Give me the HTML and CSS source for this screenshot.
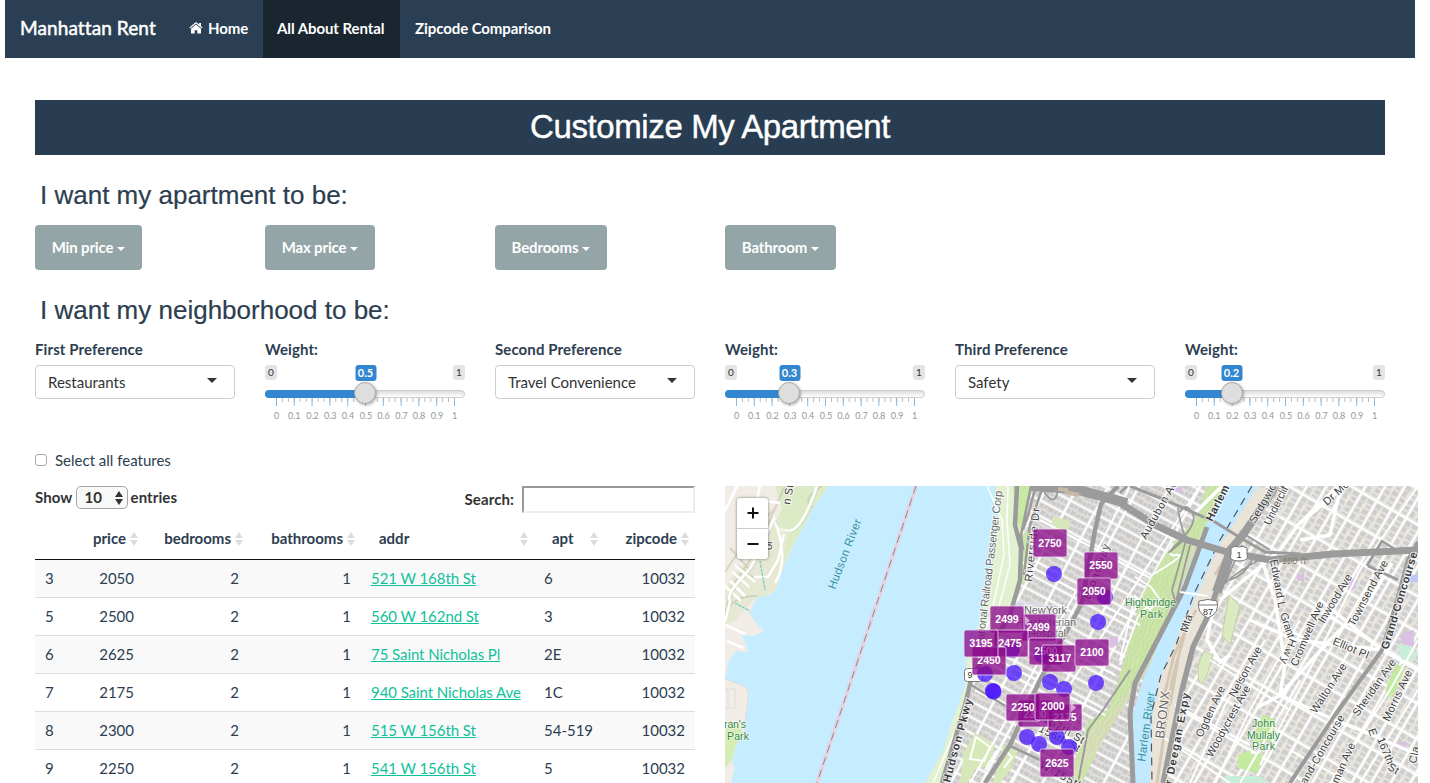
FILE: index.html
```html
<!DOCTYPE html>
<html lang="en">
<head>
<meta charset="utf-8">
<title>Manhattan Rent</title>
<link rel="stylesheet" href="styles.css">
</head>
<body>
<svg class="defs" width="0" height="0">
  <defs>
    <symbol id="sort" viewBox="0 0 8 14"><path d="M4 0l4 6H0zM4 14l4-6H0z" fill="#dcdcdc"/></symbol>
    <pattern id="minor" x="11" width="5.933" height="4" patternUnits="userSpaceOnUse"><rect width="1" height="4" fill="#bbb"/></pattern>
    <pattern id="major" x="11" width="17.8" height="8" patternUnits="userSpaceOnUse"><rect width="1" height="8" fill="#86b9e2"/></pattern>
    <g id="scale">
      <rect x="11" width="179" height="4" fill="url(#minor)"/>
      <rect x="11" width="179" height="8" fill="url(#major)"/>
      <g class="scale-text">
        <text x="11.5" y="21">0</text><text x="29.3" y="21">0.1</text><text x="47.5" y="21">0.2</text><text x="65.3" y="21">0.3</text><text x="83" y="21">0.4</text><text x="101" y="21">0.5</text><text x="118.5" y="21">0.6</text><text x="136.5" y="21">0.7</text><text x="154" y="21">0.8</text><text x="172" y="21">0.9</text><text x="189.5" y="21">1</text>
      </g>
    </g>
  </defs>
</svg>

<nav class="navbar">
  <a class="brand">Manhattan Rent</a>
  <a class="nav-item home"><svg width="14" height="12" viewBox="0 0 14 12"><path d="M7 2.6L2 6.8V11q0 .6.6.6H5.700V8.200h2.600v3.400h3.100q.6 0 .6-.6V6.800zM13.600 5.600L12 4.200V1h-1.900v1.600L7.700.600Q7 .1 6.300.600L.4 5.600l.6.8L7 1.400l6 5z" fill="#fff"/></svg>Home</a>
  <a class="nav-item all active">All About Rental</a>
  <a class="nav-item zip">Zipcode Comparison</a>
</nav>

<main class="page">
  <h1 class="banner"><span>Customize My Apartment</span></h1>
  <h2 class="question apt-q">I want my apartment to be:</h2>
  <div class="columns">
    <div><button class="drop b1">Min price<i></i></button></div>
    <div><button class="drop b2">Max price<i></i></button></div>
    <div><button class="drop b3">Bedrooms<i></i></button></div>
    <div><button class="drop b4">Bathroom<i></i></button></div>
  </div>
  <h2 class="question hood-q">I want my neighborhood to be:</h2>
  <div class="columns prefs">
    <div><label class="caption">First Preference</label><div class="choice">Restaurants<i></i></div></div>
    <div><label class="caption">Weight:</label>
      <div class="slider"><div class="ends"><span>0</span><span>1</span></div><div class="track"><div class="fill" style="width:100px"></div></div>
      <svg class="scale" width="200" height="24"><use href="#scale"/></svg><b class="value" style="left:100.500px">0.5</b><span class="handle" style="left:100px"></span></div></div>
    <div><label class="caption">Second Preference</label><div class="choice">Travel Convenience<i></i></div></div>
    <div><label class="caption">Weight:</label>
      <div class="slider"><div class="ends"><span>0</span><span>1</span></div><div class="track"><div class="fill" style="width:64px"></div></div>
      <svg class="scale" width="200" height="24"><use href="#scale"/></svg><b class="value" style="left:64.500px">0.3</b><span class="handle" style="left:64px"></span></div></div>
    <div><label class="caption">Third Preference</label><div class="choice">Safety<i></i></div></div>
    <div><label class="caption">Weight:</label>
      <div class="slider"><div class="ends"><span>0</span><span>1</span></div><div class="track"><div class="fill" style="width:47px"></div></div>
      <svg class="scale" width="200" height="24"><use href="#scale"/></svg><b class="value" style="left:46.500px">0.2</b><span class="handle" style="left:47px"></span></div></div>
  </div>
  <label class="check"><span class="box"></span><span class="check-text">Select all features</span></label>

  <div class="results">
    <section class="listing">
      <div class="tools">
        <div class="length"><span class="word">Show</span><span class="num"><span class="word">10</span><svg width="8" height="14" viewBox="0 0 8 14"><path d="M4 0l4 6H0zM4 14l4-6H0z" fill="#333"/></svg></span><span class="word">entries</span></div>
        <div class="search"><span class="word">Search:</span><span class="field"></span></div>
      </div>
      <table>
        <colgroup><col class="c1"><col class="c2"><col class="c3"><col class="c4"><col class="c5"><col class="c6"><col class="c7"></colgroup>
        <thead><tr><th></th>
          <th><div class="head"><span class="word">price</span><svg><use href="#sort"/></svg></div></th>
          <th><div class="head"><span class="word">bedrooms</span><svg><use href="#sort"/></svg></div></th>
          <th><div class="head"><span class="word">bathrooms</span><svg><use href="#sort"/></svg></div></th>
          <th><div class="head wide"><span class="word">addr</span><svg><use href="#sort"/></svg></div></th>
          <th><div class="head wide"><span class="word">apt</span><svg><use href="#sort"/></svg></div></th>
          <th><div class="head"><span class="word">zipcode</span><svg><use href="#sort"/></svg></div></th></tr></thead>
        <tbody>
          <tr><td class="l">3</td><td>2050</td><td>2</td><td>1</td><td class="l"><a>521 W 168th St</a></td><td class="l">6</td><td>10032</td></tr>
          <tr><td class="l">5</td><td>2500</td><td>2</td><td>1</td><td class="l"><a>560 W 162nd St</a></td><td class="l">3</td><td>10032</td></tr>
          <tr><td class="l">6</td><td>2625</td><td>2</td><td>1</td><td class="l"><a>75 Saint Nicholas Pl</a></td><td class="l">2E</td><td>10032</td></tr>
          <tr><td class="l">7</td><td>2175</td><td>2</td><td>1</td><td class="l"><a>940 Saint Nicholas Ave</a></td><td class="l">1C</td><td>10032</td></tr>
          <tr><td class="l">8</td><td>2300</td><td>2</td><td>1</td><td class="l"><a>515 W 156th St</a></td><td class="l">54-519</td><td>10032</td></tr>
          <tr><td class="l">9</td><td>2250</td><td>2</td><td>1</td><td class="l"><a>541 W 156th St</a></td><td class="l">5</td><td>10032</td></tr>
        </tbody>
      </table>
    </section>

    <section class="map">
      <svg width="693" height="297" viewBox="725 486 693 297">
        <defs>
          <pattern id="city" width="27" height="14" patternUnits="userSpaceOnUse" patternTransform="translate(1040 500) rotate(28)">
            <rect width="27" height="14" fill="#fff"/><rect x="1" y="1" width="25" height="12.300" fill="#dfdedc"/>
            <path d="M2 2h4v4H2zM7 2h3v3H7zM11 2h6v4h-6zM18 2h3v4h-3zM22 2h3v3h-3zM2 8h3v4H2zM6 8h5v4H6zM12 9h4v3h-4zM17 8h3v4h-3zM21 8h4v4h-4z" fill="#cbcac9"/>
          </pattern>
          <pattern id="bronx" width="17" height="31" patternUnits="userSpaceOnUse" patternTransform="translate(1300 600) rotate(30)">
            <rect width="17" height="31" fill="#fff"/><rect x="1" y="1" width="15" height="29" fill="#e6e4e0"/>
            <path d="M2 2h5v5H2zM9 2h6v4H9zM2 8h4v6H2zM10 8h5v3h-5zM9 13h6v5H9zM2 16h5v4H2zM2 22h4v6H2zM10 20h5v4h-5zM9 26h6v2H9z" fill="#cfcecc"/><path d="M7 9h2v8H7z" fill="#f1eadb"/>
          </pattern>
          <pattern id="contour" width="9" height="18" patternUnits="userSpaceOnUse" patternTransform="rotate(24)">
            <path d="M2 0Q5 5 2 9T2 18M6 0Q8 5 6 9T6 18" fill="none" stroke="#b8cc9c" stroke-width=".5"/>
          </pattern>
        </defs>
        <rect x="725" y="486" width="693" height="297" fill="#c6edff"/>

        <!-- New Jersey shore -->
        <path d="M725 486H828L812 510 800 533 785 563 776 590 770 595 756 597 750 614 758 625 764 631 754 636 742 635 748 652 736 651 729 660 725 677z" fill="#f1ede6"/>
        <path d="M775 486H828L812 510 800 533 788 555 776 588 766 596 757 598 764 560 770 534 782 508z" fill="#dcebc6"/>
        <path d="M725 590Q738 562 764 556L766 530 788 534 775 592 757 596 736 620 725 625z" fill="#e6e8d3"/>
        <path d="M785 486L775 508 764 534 750 560 730 590 725 620M822 486Q800 500 813 508M776 508L763 520 733 560 725 572M730 548L750 570M737 565L754 578M735 572L748 587M725 610Q738 595 757 596" fill="none" stroke="#c5c4ae" stroke-width="2" opacity=".6"/>
        <path d="M725 679L744 686Q750 690 748 698L744 735 736 745 732 763 735 768 731 783H725z" fill="#f1ede6"/>
        <path d="M725 729L738 724 744 734 736 745 732 760 725 768z" fill="#d5ecb6"/>
        <path d="M817 486Q802 530 789 531T774 519L757 553Q754 566 740 580T730 601L725 622M774 519Q790 560 775 583M784 534L778 560 768 577H754M757 500L780 503M737 486L725 511M760 486L757 500M735 565L755 582M733 572L749 587M730 581L745 596M725 586L741 601M725 625L745 634M727 641L743 648" fill="none" stroke="#fff" stroke-width="2.500"/>
        <path d="M817 486Q802 530 789 531T774 519L757 553Q754 566 740 580T730 601" fill="none" stroke="#ccc" stroke-width=".6" transform="translate(2 1)"/>
        <path d="M760 561L765 590M735 603L750 611" fill="none" stroke="#65cfc5" stroke-width="1.200" stroke-dasharray="3 1"/>
        <path d="M725 679L744 686Q750 690 748 698L744 735 736 745M725 689H735V708H725M728 689V708" fill="none" stroke="#ddd" stroke-width="1"/>

        <path d="M916 486L817 783" stroke="#e3d3e0" stroke-width="4"/>
        <path d="M916 486L817 783" stroke="#99858f" stroke-width="1" stroke-dasharray="8 5"/>

        <!-- Manhattan and the Bronx -->
        <path d="M995 486L998 513 993 547 990 580 982 613 975 640 967 660 965 687 953 720 942 753 925 783H1418V486z" fill="url(#city)"/>
        <path d="M1258 486L1218 547 1198 593 1173 647 1160 680 1153 713 1150 783H1418V486z" fill="url(#bronx)"/>
        <path d="M995 486L998 513 993 547 990 580 982 613 975 640 967 660 965 687 953 720 942 753 925 783H940L957 735 967 700 980 660 1003 625 1018 590 1024 560 1022 535 1033 486z" fill="#e2f1d0"/>
        <path d="M1013 486H1033L1022 532 1016 520zM1020 535L1032 530 1026 580 1021 585z" fill="#c9e7a5"/>
        <path d="M975 733L995 745 990 765 975 770 967 783H960L964 752zM1003 745L1018 750 1010 770 1000 783H993zM1052 517L1070 520 1068 532 1052 536z" fill="#d6e8b8"/>
        <path d="M976 737L990 747 984 761 970 759zM1005 750L1012 757 1004 768M985 770L997 750" fill="none" stroke="#fff" stroke-width="2"/>
        <path d="M1207 486L1195 520 1173 543 1153 575 1140 600 1133 630 1122 668 1110 708 1088 722 1073 765 1070 783H1082L1100 745 1130 697 1150 665 1172 605 1195 555 1210 520 1228 486z" fill="#cce6a8"/>
        <path d="M1190 550L1165 620 1140 675 1110 713 1085 735 1072 783 1090 760 1130 697 1150 665 1175 595 1210 520z" fill="#d8dfb8"/>
        <path d="M1207 486L1195 520 1173 543 1153 575 1140 600 1133 630 1122 668 1110 708 1088 722 1073 765 1100 745 1130 697 1150 665 1172 605 1195 555 1228 486z" fill="url(#contour)"/>
        <path d="M1135 577L1151 587 1160 600 1150 610 1135 596 1120 660M1173 543Q1165 557 1177 555T1152 575M1164 607Q1142 600 1135 625L1120 665" fill="none" stroke="#fff" stroke-width="1.800"/>
        <path d="M1227 486L1203 530 1197 547 1179 593 1157 647 1143 680 1133 713 1135 783H1150L1153 713 1160 680 1173 647 1198 593 1218 547 1230 530 1258 486z" fill="#c1e9ff"/>
        <path d="M1258 486L1230 530 1218 547 1198 593 1173 647 1160 680 1153 713 1150 783H1163L1182 690 1193 647 1213 600 1235 547 1270 490z" fill="#eae4d8"/>
        <path d="M1196 610L1174 655 1162 705M1187 625L1172 680 1157 783M1242 530L1215 575M1178 660L1170 705" fill="none" stroke="#c7b9a3" stroke-width="3" opacity=".65"/>
        <path d="M1252 486L1220 540 1194 594 1176 645 1161 675 1151 715 1152 783" fill="none" stroke="#555" stroke-width="1.200" stroke-dasharray="8 6"/>
        <path d="M1205 650Q1195 667 1199 680T1213 655L1203 651M1229 595L1240 605 1230 645 1222 635z" fill="#dceac2" stroke="#bed0a5"/>
        <path d="M1263 714L1275 720 1274 742 1252 742zM1252 755L1263 753 1258 772H1250zM1238 755L1250 750 1256 772 1238 768zM1397 664L1405 668 1392 700 1385 690z" fill="#c4eaa0"/>
        <path d="M1397 645H1415V660H1402zM1225 776H1260L1270 783H1222z" fill="#c8eed9"/>
        <path d="M1402 633L1414 630V647L1401 643zM1348 582L1356 577V588L1348 592zM1296 576L1304 573V581H1298zM1398 743L1406 741V750L1397 748zM1170 488L1182 486V494zM1110 637L1118 636V645L1110 648z" fill="#d8c1e3"/>
        <path d="M1409 575H1418V582H1407z" fill="#bec7f2"/>
        <path d="M1000 615L1020 600 1050 605 1058 625 1035 645 1010 635z" fill="#dddbe9" opacity=".8"/>

        <g fill="none" stroke="#fff" stroke-width="3.500">
          <path d="M1338 486L1298 525 1280 550 1220 600M1298 525L1340 490 1330 535 1300 540M1250 620L1295 640 1382 650 1418 670M1262 560L1275 600 1285 665 1280 695 1330 718 1365 732 1418 755M1281 695L1258 707M1320 600L1382 650M1280 695L1330 640 1370 600 1392 563M1215 597L1207 640 1220 662 1230 655M1222 486L1195 513"/>
          <path d="M1130 486L1082 580 1018 700 970 783M1200 486L1060 700 1010 783M1040 520L1150 578M1018 560L1140 625M998 615L1115 675M988 655L1105 715M975 690L1070 740" stroke-width="2"/>
          <path d="M1260 765L1320 650 1360 570 1418 486M1190 783L1225 705 1265 640M1215 783L1250 710 1300 620M1240 783L1300 680M1330 783L1390 690 1418 640M1360 783L1418 690M1160 735L1230 783M1175 705L1250 745M1210 660L1290 710M1290 750L1350 783M1310 600L1350 630" stroke-width="2"/>
        </g>
        <path d="M987 486L1002 520 1004 555 990 620 975 650 962 715 933 783M1008 486L1007 520 1010 565 998 610" fill="none" stroke="#fff" stroke-width="1.500"/>

        <g fill="none" stroke="#9b9b9b" stroke-linejoin="round">
          <path d="M1017 486L1015 525 1021 548 1020 580 1010 615 988 650 971 680 965 705 960 722 942 783" stroke-width="4.500"/>
          <path d="M1031 486L1021 535 1023 550M1036 486L1028 515 1023 530M1043 486L1030 525 1024 575" stroke-width="2.500"/>
          <path d="M1118 486L1101 504 1095 530 1082 603 1062 640 1040 680 1010 745 985 783" stroke-width="4.500"/>
          <path d="M968 683L1007 707M1008 745L1040 760 1075 780M1120 493L1127 486" stroke-width="2.500"/>
          <path d="M1030 486L1075 489 1127 503" stroke-width="10"/>
          <path d="M1120 503L1155 525 1187 540 1227 552 1270 560 1333 554 1418 550" stroke-width="7"/>
          <path d="M1130 486L1165 500 1215 522 1244 540 1265 552 1300 554" stroke-width="3"/>
          <path d="M1207 527L1185 587 1160 635 1135 683 1130 713 1133 783" stroke-width="5"/>
          <path d="M1276 486L1243 535 1230 550" stroke-width="8"/><path d="M1232 548L1217 592" stroke-width="10"/>
          <path d="M1217 590L1207 618 1193 647 1182 690 1163 783" stroke-width="5.500"/>
          <path d="M1178 508Q1180 525 1187 542M1180 512Q1185 502 1192 512T1178 543 1187 537L1172 590 1176 605M1242 545L1225 583Q1250 562 1268 557M1246 535L1270 550M1230 580Q1245 575 1252 560M1175 605L1190 545M1050 492Q1060 482 1057 494T1044 492" stroke-width="1.800"/>
          <path d="M1130 670L1103 710 1088 730 1078 783" stroke-width="2"/>
          <path d="M1418 542L1408 560 1397 600 1382 650 1335 715 1290 783" stroke-width="4"/>
          <path d="M1367 566L1382 541 1398 551M1368 566L1398 580" stroke-width="2.500"/>
        </g>
        <path d="M1058 489l10 1M1065 492l14 3" stroke="#c4b8a6" stroke-width="4"/>
        <path d="M1180 592L1208 596" stroke="#fff" stroke-width="2"/>

        <g class="road">
          <text transform="translate(790 505) rotate(-80)" textLength="20">n St</text>
          <text transform="translate(772 550) rotate(-90)">or</text>
          <text class="soft" transform="translate(984 640) rotate(-83)" textLength="150">ational Railroad Passenger Corp</text>
          <text transform="translate(1032 582) rotate(-84)" textLength="74">Riverside Dr</text>
          <text transform="translate(1090 600) rotate(-70)" textLength="58">Broadway</text>
          <text transform="translate(1146 540) rotate(-61)" textLength="64">Audubon Av</text>
          <text transform="translate(1212 522) rotate(-63)" textLength="39" class="strong">Harlem</text>
          <text transform="translate(1255 524) rotate(-60)" textLength="43">Sedgwic</text>
          <text transform="translate(1270 526) rotate(-64)" textLength="42">Underclif</text>
          <text transform="translate(1327 506) rotate(-42)" textLength="30">Dr Mc</text>
          <text transform="translate(1270 560) rotate(80)" textLength="49">Edward L</text>
          <text transform="translate(1280 614) rotate(72)" textLength="26">Grant</text>
          <text transform="translate(1290 638) rotate(112)" textLength="26">Hwy</text>
          <text transform="translate(1297 667) rotate(-67)" textLength="69">Cromwell Ave</text>
          <text transform="translate(1324 624) rotate(-59)" textLength="55">Inwood Ave</text>
          <text transform="translate(1354 627) rotate(-62)" textLength="73">Townsend Ave</text>
          <text transform="translate(1332 644) rotate(23)" textLength="38">Elliot Pl</text>
          <text transform="translate(1388 650) rotate(-73)" textLength="101" class="strong">Grand-Concourse</text>
          <text transform="translate(1316 714) rotate(-57)" textLength="57">Walton Ave</text>
          <text transform="translate(1358 717) rotate(-55)" textLength="67">Sheridan Ave</text>
          <text transform="translate(1389 722) rotate(-65)" textLength="55">Morris Ave</text>
          <text transform="translate(1306 785) rotate(-60)" textLength="78">and-Concourse</text>
          <text transform="translate(1338 784) rotate(-66)" textLength="43">man Ave</text>
          <text transform="translate(1368 730) rotate(70)" textLength="8">E</text>
          <text transform="translate(1377 739) rotate(68)" textLength="28">167th</text>
          <text transform="translate(1387 769) rotate(30)" textLength="11">St</text>
          <text transform="translate(1416 764) rotate(-78)" textLength="17">Cla</text>
          <text transform="translate(1202 738) rotate(-65)" textLength="55">Ogden Ave</text>
          <text transform="translate(1235 698) rotate(-61)" textLength="56">Nelson Ave</text>
          <text transform="translate(1212 758) rotate(-61)" textLength="80">Woodycrest Ave</text>
          <text transform="translate(1172 785) rotate(-79)" textLength="93" class="strong">r Deegan Expy</text>
          <text transform="translate(1164 739) rotate(-83)" textLength="48" class="soft large">BRONX</text>
          <text transform="translate(1187 633) rotate(-72)" textLength="18">Mta</text>
          <text transform="translate(950 783) rotate(-75)" textLength="86" class="strong">Hudson Pkwy</text>
          <text transform="translate(1030 714) rotate(30)" textLength="60">W 157th St</text>
          <text transform="translate(1038 731) rotate(28)" textLength="45">156th St</text>
          <text transform="translate(1039 767) rotate(29)" textLength="48">W-155th</text>
          <text x="1024" y="614" textLength="43" class="soft">NewYork</text><text x="1016" y="626" textLength="60" class="soft">Presbyterian</text><text x="1028" y="637" textLength="38" class="soft">Hospital</text>
          <text x="1282" y="564" textLength="24" class="feet">100 ft</text>
        </g>
        <g class="river"><text transform="translate(835 590) rotate(-69)" textLength="74">Hudson River</text><text transform="translate(1145 762) rotate(-82)" textLength="70">Harlem River</text></g>
        <g class="park"><text x="1125" y="606" textLength="51">Highbridge</text><text x="1140" y="618" textLength="23">Park</text><text x="1252" y="727" textLength="23">John</text><text x="1247" y="739" textLength="33">Mullaly</text><text x="1252" y="750" textLength="23">Park</text><text x="724" y="728" textLength="22">ran's</text><text x="727" y="740" textLength="22">Park</text></g>

        <g fill="#fff" stroke="#777"><path d="M1231 548Q1235 545 1239 547 1243 545 1247 548L1247 554Q1250 561 1239 561T1231 554z"/><path d="M1199 601Q1208 598 1217 601 1220 613 1208 618 1196 613 1199 601zM1198 605H1218" /><rect x="964.500" y="668.500" width="18" height="13" rx="3"/></g>
        <g class="shield"><text x="1239" y="558">1</text><text x="1208" y="615">87</text><text x="970" y="678">9</text></g>

        <g fill="#4815ff" fill-opacity=".76">
          <circle cx="1054" cy="574" r="8"/><circle cx="1105" cy="597" r="8"/><circle cx="1098" cy="622" r="8"/><circle cx="1012" cy="650" r="8"/><circle cx="1042" cy="655" r="8"/><circle cx="985" cy="674" r="8"/><circle cx="1014" cy="673" r="8"/><circle cx="993" cy="691" r="8"/><circle cx="993.500" cy="691.500" r="8"/><circle cx="1050" cy="682" r="8"/><circle cx="1064" cy="689" r="8"/><circle cx="1096" cy="683" r="8"/><circle cx="1027" cy="737" r="8"/><circle cx="1039" cy="744" r="8"/><circle cx="1057" cy="737" r="8"/><circle cx="1069" cy="747" r="8"/>
        </g>
        <g class="price">
          <g transform="translate(1033 529)"><rect width="34" height="28" rx="2"/><text x="17" y="18">2750</text></g>
          <g transform="translate(1084 552)"><rect width="34" height="27" rx="2"/><text x="17" y="17">2550</text></g>
          <g transform="translate(1077 578)"><rect width="34" height="27" rx="2"/><text x="17" y="17">2050</text></g>
          <g transform="translate(1022 614)"><rect width="34" height="27" rx="2"/><text x="16" y="17">2499</text></g>
          <g transform="translate(990 606)"><rect width="34" height="27" rx="2"/><path d="M35 10v9l5-4.500z"/><text x="17" y="17">2499</text></g>
          <g transform="translate(994 630)"><rect width="34" height="27" rx="2"/><text x="16" y="17">2475</text></g>
          <g transform="translate(972 647)"><rect width="34" height="28" rx="2"/><text x="17" y="17">2450</text></g>
          <g transform="translate(964 630)"><rect width="34" height="27" rx="2"/><text x="17" y="17">3195</text></g>
          <g transform="translate(1029 638)"><rect width="34" height="27" rx="2"/><text x="17" y="17">2500</text></g>
          <g transform="translate(1042 645)"><rect width="34" height="27" rx="2"/><text x="18" y="17">3117</text></g>
          <g transform="translate(1075 639)"><rect width="34" height="27" rx="2"/><text x="17" y="17">2100</text></g>
          <g transform="translate(1018 700)"><rect width="34" height="27" rx="2"/><text x="17" y="18">2300</text></g>
          <g transform="translate(1048 704)"><rect width="34" height="27" rx="2"/><text x="17" y="17">2175</text></g>
          <g transform="translate(1006 694)"><rect width="34" height="27" rx="2"/><text x="17" y="17">2250</text></g>
          <g transform="translate(1035 693)"><rect width="35" height="27" rx="2"/><path d="M36 10v9l5-4.500z"/><text x="18" y="17">2000</text></g>
          <g transform="translate(1040 749)"><rect width="34" height="28" rx="2"/><text x="17" y="18">2625</text></g>
        </g>
      </svg>
      <div class="zoom"><span><svg width="14" height="14"><path d="M7 1.500v11M1.500 7h11" stroke="#111" stroke-width="2"/></svg></span><span><svg width="14" height="14"><path d="M1.500 7h11" stroke="#111" stroke-width="2"/></svg></span></div>
    </section>
  </div>
</main>
</body>
</html>
```
FILE: styles.css
```css
* { box-sizing: border-box; }
html, body { height: 783px; overflow: hidden; }
body { margin: 0; background: #fff; color: #2c3e50; font: 15px/20px Lato, sans-serif; }
.defs { display: block; height: 0; }

.navbar { display: flex; height: 58px; margin: 0 15px 0 5px; background: #2a3f53; color: #fff; }
.brand, .nav-item { display: flex; align-items: center; white-space: nowrap; padding-bottom: 2px; }
.brand { width: 169px; padding-left: 15px; font-size: 19px; letter-spacing: .1px; -webkit-text-stroke: .5px #fff; }
.nav-item { font-weight: 700; font-size: 15px; padding-left: 15px; letter-spacing: -.08px; }
.home { width: 89px; gap: 5px; }
.all { width: 137px; padding-left: 14px; }
.active { background: #1b2530; }

.page { padding: 42px 0 0 35px; }
.banner { width: 1350px; height: 55px; margin: 0; background: #283d51; color: #fff; text-align: center; font: 33px/54px "Liberation Sans", Arial, sans-serif; letter-spacing: -.4px; -webkit-text-stroke: .4px #fff; }
.question { margin: 0; padding-left: 5px; font: 26px/32px "Liberation Sans", Arial, sans-serif; -webkit-text-stroke: .2px #2c3e50; }
.apt-q { padding-top: 24px; height: 70px; }
.hood-q { padding-top: 24px; height: 70px; }
.columns { display: grid; grid-template-columns: repeat(6, 200px); column-gap: 30px; }
.columns > div { min-width: 0; }

.drop { display: flex; align-items: center; justify-content: center; gap: 4px; height: 45px; padding: 0 0 2px; border: 0; border-radius: 4px; background: #93a5a6; color: #fff; font: 700 15px Lato, sans-serif; letter-spacing: -.15px; }
.drop i { border: 4px solid transparent; border-top-color: #fff; border-bottom: 0; margin-top: 4px; }
.b1 { width: 107px; }
.b2 { width: 110px; }
.b3 { width: 112px; }
.b4 { width: 111px; }

.prefs { height: 110px; }
.caption { display: block; height: 25px; line-height: 18px; font-weight: 700; letter-spacing: .1px; }
.choice { display: flex; align-items: center; justify-content: space-between; width: 200px; height: 34px; padding: 0 17px 0 12px; border: 1px solid #ccc; border-radius: 4px; color: #333; }
.choice i { border: 5px solid transparent; border-top-color: #333; border-bottom: 0; margin-top: -3px; }

.slider { position: relative; width: 200px; }
.ends { display: flex; justify-content: space-between; height: 25px; }
.ends span { width: 12px; height: 15px; border-radius: 3px; background: #e4e4e4; color: #333; font-size: 10px; line-height: 15px; text-align: center; }
.track { height: 8px; border: 1px solid #ccc; border-radius: 5px; background: linear-gradient(#ddd, #fff); }
.fill { height: 8px; margin: -1px; border-radius: 5px 0 0 5px; background: #3287d0; }
.scale { display: block; }
.scale-text { font-size: 9px; fill: #8f979e; text-anchor: middle; }
.value { position: absolute; top: 0; width: 21px; height: 16px; transform: translateX(-50%); border-radius: 3px; background: #3287d0; color: #fff; font-size: 11px; line-height: 16px; text-align: center; }
.handle { position: absolute; top: 17px; width: 22px; height: 22px; transform: translateX(-50%); border: 1px solid #aaa; border-radius: 50%; background: #dedede; box-shadow: 1px 1px 3px rgba(0, 0, 0, .3); }

.check { display: flex; align-items: center; gap: 8px; height: 20px; margin-bottom: 16px; }
.check-text { padding-bottom: 1px; }
.box { width: 12px; height: 12px; border: 1px solid #a9a9a9; border-radius: 3px; }

.results { display: flex; gap: 30px; }
.listing { width: 660px; }
.tools { display: flex; justify-content: space-between; height: 32px; color: #333; font-weight: 700; letter-spacing: .1px; }
.word { padding-bottom: 2px; }
.length { display: flex; align-items: center; gap: 3px; height: 23px; }
.num { display: flex; align-items: center; justify-content: space-between; width: 52px; height: 23px; padding: 0 4px 0 8px; border: 1px solid #a6a6a6; border-radius: 5px; background: #f8f8f8; }
.search { display: flex; align-items: center; gap: 8px; height: 27px; }
.field { width: 173px; height: 27px; border: 2px solid; border-color: #9a9a9a #eee #eee #9a9a9a; }

table { width: 660px; table-layout: fixed; border-collapse: separate; border-spacing: 0; }
.c1 { width: 34px; }
.c2 { width: 75px; }
.c3 { width: 105px; }
.c4 { width: 112px; }
.c5 { width: 173px; }
.c6 { width: 70px; }
.c7 { width: 91px; }
th { height: 42px; padding: 0; border-bottom: 1px solid #111; font-weight: 700; }
.head { display: flex; align-items: center; justify-content: flex-end; gap: 4px; padding: 0 6px 0 0; }
.head.wide { justify-content: space-between; padding-left: 18px; }
.head svg { width: 8px; height: 14px; flex: none; }
td { height: 38px; padding: 0 10px 2px; border-bottom: 1px solid #ddd; text-align: right; white-space: nowrap; }
td.l { text-align: left; }
tbody tr:nth-child(odd) { background: #f9f9f9; }
td a { color: #0fc29b; text-decoration: underline; letter-spacing: -.07px; }

.map { position: relative; width: 693px; height: 297px; }
.map > svg { display: block; }
.zoom { position: absolute; left: 12px; top: 12px; width: 31px; border-radius: 3px; background: #fff; box-shadow: 0 0 3px rgba(0, 0, 0, .5); }
.zoom span { display: flex; align-items: center; justify-content: center; height: 30px; }
.zoom span + span { height: 31px; border-top: 1px solid #ccc; }
.map text { font-family: "Liberation Sans", Arial, sans-serif; }
.road text { font-size: 11px; fill: #3d3d3d; stroke: #fff; stroke-width: 2px; stroke-opacity: .75; paint-order: stroke; }
.road .soft { fill: #666; }
.road .large { font-size: 13px; }
.road .strong { font-weight: 700; }
.road .feet { font-size: 9px; font-style: italic; fill: #8a7966; stroke: none; }
.river text { font-size: 11.5px; fill: #37929e; }
.park text { font-size: 10.5px; fill: #32883f; stroke: #fff; stroke-width: 1.5px; stroke-opacity: .6; paint-order: stroke; }
.shield text { font-size: 9px; fill: #333; text-anchor: middle; }
.price rect { fill: #8a078a; fill-opacity: .76; stroke: #eedcf0; stroke-opacity: .8; }
.price path { fill: #e3c4e4; fill-opacity: .8; }
.price text { font-size: 10.5px; font-weight: 700; fill: #fff; text-anchor: middle; }
```
